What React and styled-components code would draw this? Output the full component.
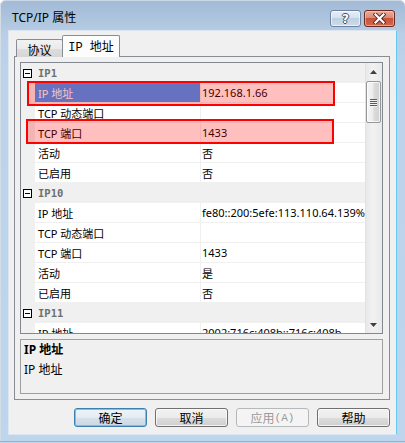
import React from "react";
import styled, { createGlobalStyle, css } from "styled-components";

const GlobalStyle = createGlobalStyle`
  html, body { margin: 0; padding: 0; background: #ffffff; }
  body { font-family: "Noto Sans", "Noto Sans CJK SC", sans-serif; }
  * { box-sizing: border-box; }
`;

const Window = styled.div`
  width: 405px;
  height: 443px;
  display: flex;
  flex-direction: column;
  padding: 0 8px 8px 8px;
  border-radius: 6px 6px 0 0;
  background: linear-gradient(to bottom, #a2bad5 0px, #aec5de 20px, #b9cfe7 34px, #bcd3eb 70px, #bdd5ed 100%);
  box-shadow: inset 0 -1px 0 #bdd5ed, inset 0 -2px 0 #5cc8f0, inset 1px 0 0 #d3dde8, inset 0 1px 0 #c9d6e4;
`;

const TitleBar = styled.div`
  height: 30px;
  flex-shrink: 0;
  display: flex;
  justify-content: space-between;
  align-items: flex-start;
  padding: 0 2px 0 4px;
`;

const Title = styled.div`
  margin-top: 10px;
  font-size: 12px;
  line-height: 16px;
  color: #000;
`;

const CaptionButtons = styled.div`
  display: flex;
  gap: 3px;
  margin-top: 10px;
`;

const CaptionButton = styled.div`
  width: 31px;
  height: 17px;
  border-radius: 3px;
  display: flex;
  align-items: center;
  justify-content: center;
  ${(p) =>
    p.$variant === "close"
      ? css`
          border: 1px solid #6b2a1f;
          background: linear-gradient(to bottom, #e9ab9c 0%, #dc8a76 45%, #c85237 50%, #d2694d 100%);
          box-shadow: inset 0 0 0 1px rgba(255, 210, 200, 0.55);
        `
      : css`
          border: 1px solid #6f83a0;
          background: linear-gradient(to bottom, #e6eef7 0%, #d5e2f0 45%, #bfd0e3 50%, #cddcec 100%);
          box-shadow: inset 0 0 0 1px rgba(255, 255, 255, 0.6);
        `}
`;

const HelpGlyph = styled.span`
  font-family: "DejaVu Sans", sans-serif;
  font-weight: bold;
  font-size: 12px;
  line-height: 12px;
  color: #ffffff;
  text-shadow: 1px 0 0 #4a4f58, -1px 0 0 #4a4f58, 0 1px 0 #4a4f58, 0 -1px 0 #4a4f58;
`;

const Client = styled.div`
  height: 405px;
  flex-shrink: 0;
  display: flex;
  flex-direction: column;
  background: #f0f0f0;
  border: 1px solid #dde6f0;
  border-right-color: #62caf0;
  padding: 5px 6px 6px 5px;
`;

const TabStrip = styled.div`
  height: 21px;
  display: flex;
  align-items: flex-end;
  padding-left: 2px;
  position: relative;
  z-index: 1;
  margin-bottom: -1px;
`;

const Tab = styled.div`
  border: 1px solid #898c95;
  border-bottom: none;
  border-radius: 2px 2px 0 0;
  display: flex;
  align-items: center;
  justify-content: center;
  font-size: 12px;
  color: #000;
  ${(p) =>
    p.$active
      ? css`
          width: 58px;
          height: 22px;
          margin-left: -1px;
          background: #fcfcfc;
          font-family: "Liberation Mono", "Noto Sans CJK SC", monospace;
          padding-bottom: 2px;
        `
      : css`
          width: 47px;
          height: 18px;
          background: linear-gradient(to bottom, #f2f2f2 0%, #ebebeb 50%, #dddddd 51%, #d6d6d6 100%);
          padding-top: 2px;
        `}
`;

const TabPanel = styled.div`
  height: 344px;
  border: 1px solid #898c95;
  background: #f0f0f0;
  padding: 5px 6px 5px 5px;
  display: flex;
  flex-direction: column;
`;

const Grid = styled.div`
  position: relative;
  height: 272px;
  flex-shrink: 0;
  border: 1px solid #828790;
  background: #ffffff;
  display: flex;
  overflow: hidden;
`;

const GridBody = styled.div`
  flex: 1;
  overflow: hidden;
  display: flex;
  flex-direction: column;
  font-size: 11px;
  color: #000;
`;

const CategoryRow = styled.div`
  height: 20px;
  flex-shrink: 0;
  display: flex;
  align-items: center;
  background: #f0f0f0;
`;

const Expander = styled.div`
  width: 14px;
  height: 20px;
  display: flex;
  align-items: center;
  padding-left: 2px;
`;

const CategoryName = styled.span`
  padding-left: 3px;
  font-family: "DejaVu Sans Mono", monospace;
  font-weight: bold;
  font-size: 10.5px;
  color: #6e6e6e;
`;

const PropRow = styled.div`
  height: 20px;
  flex-shrink: 0;
  display: grid;
  grid-template-columns: 14px 166px 1fr;
`;

const MarginCell = styled.div`
  background: #f0f0f0;
`;

const NameCell = styled.div`
  display: flex;
  align-items: center;
  padding-left: 3px;
  border-bottom: 1px solid #f0f0f0;
  border-right: 1px solid #f0f0f0;
  white-space: nowrap;
  ${(p) =>
    p.$selected &&
    css`
      background: #3399ff;
      color: #ffffff;
    `}
`;

const ValueCell = styled.div`
  display: flex;
  align-items: center;
  padding-left: 1px;
  border-bottom: 1px solid #f0f0f0;
  white-space: nowrap;
  overflow: hidden;
`;

const Scrollbar = styled.div`
  width: 17px;
  flex-shrink: 0;
  display: flex;
  flex-direction: column;
  background: linear-gradient(to right, #dcdcdc 0px, #e8e8e8 1px, #f2f2f2 45%, #e9e9e9 100%);
`;

const ArrowButton = styled.div`
  height: 17px;
  flex-shrink: 0;
  display: flex;
  align-items: center;
  justify-content: center;
`;

const Thumb = styled.div`
  height: 42px;
  margin: 1px 1px 0 1px;
  border: 1px solid #979797;
  border-radius: 2px;
  background: linear-gradient(to right, #f6f6f6 0%, #ececec 45%, #dadada 55%, #d2d2d2 100%);
  box-shadow: inset 0 0 0 1px rgba(255, 255, 255, 0.7);
  display: flex;
  flex-direction: column;
  align-items: center;
  justify-content: center;
  gap: 1px;
`;

const Grip = styled.div`
  width: 7px;
  height: 1px;
  background: #5a5a5a;
  box-shadow: 0 1px 0 #f4f4f4;
`;

const Spacer = styled.div`
  flex: 1;
`;

const Annotation = styled.div`
  position: absolute;
  left: ${(p) => p.$left}px;
  top: ${(p) => p.$top}px;
  width: ${(p) => p.$width}px;
  height: ${(p) => p.$height}px;
  border: 2px solid #ff0000;
  background: rgba(255, 0, 0, 0.25);
  pointer-events: none;
`;

const DescBox = styled.div`
  margin-top: 5px;
  height: 55px;
  border: 1px solid #a0a0a0;
  padding: 1px 3px;
  font-size: 12px;
  color: #000;
`;

const DescTitle = styled.div`
  font-weight: bold;
  line-height: 18px;
`;

const DescText = styled.div`
  margin-top: 2px;
  line-height: 18px;
`;

const ButtonRow = styled.div`
  margin-top: 8px;
  height: 19px;
  display: flex;
  justify-content: flex-end;
  gap: 8px;
`;

const DialogButton = styled.div`
  width: 73px;
  height: 19px;
  border-radius: 3px;
  display: flex;
  align-items: center;
  justify-content: center;
  font-family: "Noto Sans CJK SC", sans-serif;
  font-size: 12px;
  color: #000;
  border: 1px solid #707070;
  background: linear-gradient(to bottom, #f2f2f2 0%, #ebebeb 50%, #dddddd 51%, #cfcfcf 100%);
  box-shadow: inset 0 0 0 1px rgba(255, 255, 255, 0.7);
  ${(p) =>
    p.$primary &&
    css`
      border-color: #3c7fb1;
      background: linear-gradient(to bottom, #eef4f8 0%, #e4ecf2 50%, #d6e1ea 51%, #cbd8e3 100%);
      box-shadow: inset 0 0 0 1px #58cff5;
    `}
  ${(p) =>
    p.$disabled &&
    css`
      border-color: #b5b9bc;
      background: #f4f4f4;
      color: #9a9a9a;
      box-shadow: none;
    `}
`;

const Mnemonic = styled.span`
  font-family: "Liberation Mono", monospace;
  font-size: 11px;
`;

const MinusBox = () => (
  <svg width="9" height="9" viewBox="0 0 9 9">
    <rect x="0.5" y="0.5" width="8" height="8" fill="#fff" stroke="#000" />
    <line x1="2" y1="4.5" x2="7" y2="4.5" stroke="#000" />
  </svg>
);

const CloseGlyph = () => (
  <svg width="13" height="11" viewBox="0 0 13 11">
    <path d="M2.5 1.5 L10.5 9.5 M10.5 1.5 L2.5 9.5" stroke="#4a2a26" strokeWidth="4" strokeLinecap="square" />
    <path d="M2.5 1.5 L10.5 9.5 M10.5 1.5 L2.5 9.5" stroke="#ffffff" strokeWidth="2.2" strokeLinecap="square" />
  </svg>
);

const Arrow = ({ down }) => (
  <svg width="7" height="4" viewBox="0 0 7 4">
    <path d={down ? "M0 0 L7 0 L3.5 4 Z" : "M0 4 L7 4 L3.5 0 Z"} fill="#404040" />
  </svg>
);

const groups = [
  {
    name: "IP1",
    rows: [
      ["IP 地址", "192.168.1.66", true],
      ["TCP 动态端口", ""],
      ["TCP 端口", "1433"],
      ["活动", "否"],
      ["已启用", "否"],
    ],
  },
  {
    name: "IP10",
    rows: [
      ["IP 地址", "fe80::200:5efe:113.110.64.139%11"],
      ["TCP 动态端口", ""],
      ["TCP 端口", "1433"],
      ["活动", "是"],
      ["已启用", "否"],
    ],
  },
  {
    name: "IP11",
    rows: [
      ["IP 地址", "2002:716c:408b::716c:408b"],
      ["TCP 动态端口", ""],
    ],
  },
];

export default function App() {
  return (
    <>
      <GlobalStyle />
      <Window>
        <TitleBar>
          <Title>TCP/IP 属性</Title>
          <CaptionButtons>
            <CaptionButton $variant="help">
              <HelpGlyph>?</HelpGlyph>
            </CaptionButton>
            <CaptionButton $variant="close">
              <CloseGlyph />
            </CaptionButton>
          </CaptionButtons>
        </TitleBar>
        <Client>
          <TabStrip>
            <Tab>协议</Tab>
            <Tab $active>IP 地址</Tab>
          </TabStrip>
          <TabPanel>
            <Grid>
              <GridBody>
                {groups.map((g) => (
                  <React.Fragment key={g.name}>
                    <CategoryRow>
                      <Expander>
                        <MinusBox />
                      </Expander>
                      <CategoryName>{g.name}</CategoryName>
                    </CategoryRow>
                    {g.rows.map(([n, v, sel], i) => (
                      <PropRow key={i}>
                        <MarginCell />
                        <NameCell $selected={sel}>{n}</NameCell>
                        <ValueCell>{v}</ValueCell>
                      </PropRow>
                    ))}
                  </React.Fragment>
                ))}
              </GridBody>
              <Scrollbar>
                <ArrowButton>
                  <Arrow />
                </ArrowButton>
                <Thumb>
                  <Grip />
                  <Grip />
                  <Grip />
                  <Grip />
                </Thumb>
                <Spacer />
                <ArrowButton>
                  <Arrow down />
                </ArrowButton>
              </Scrollbar>
              <Annotation $left={6} $top={18} $width={308} $height={25} />
              <Annotation $left={5} $top={56} $width={308} $height={25} />
            </Grid>
            <DescBox>
              <DescTitle>IP 地址</DescTitle>
              <DescText>IP 地址</DescText>
            </DescBox>
          </TabPanel>
          <ButtonRow>
            <DialogButton $primary>确定</DialogButton>
            <DialogButton>取消</DialogButton>
            <DialogButton $disabled>
              应用<Mnemonic>(A)</Mnemonic>
            </DialogButton>
            <DialogButton>帮助</DialogButton>
          </ButtonRow>
        </Client>
      </Window>
    </>
  );
}
